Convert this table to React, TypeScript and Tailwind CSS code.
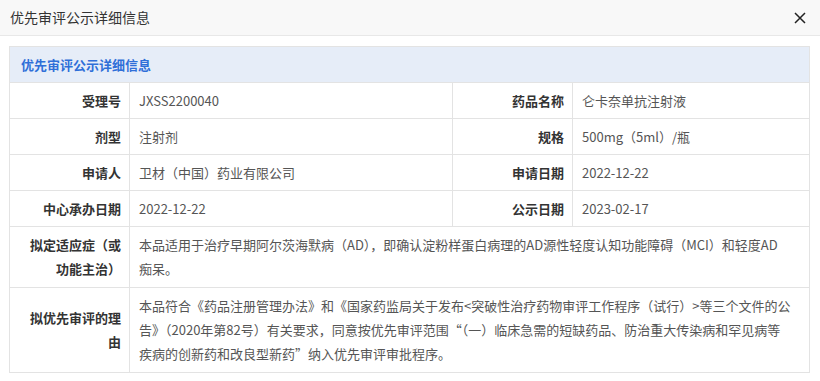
import React from 'react';

interface Pair {
  label: string;
  value: string;
}

interface WideRow {
  label: string;
  lines: string[];
}

const pairRows: [Pair, Pair][] = [
  [
    { label: '受理号', value: 'JXSS2200040' },
    { label: '药品名称', value: '仑卡奈单抗注射液' }
  ],
  [
    { label: '剂型', value: '注射剂' },
    { label: '规格', value: '500mg（5ml）/瓶' }
  ],
  [
    { label: '申请人', value: '卫材（中国）药业有限公司' },
    { label: '申请日期', value: '2022-12-22' }
  ],
  [
    { label: '中心承办日期', value: '2022-12-22' },
    { label: '公示日期', value: '2023-02-17' }
  ]
];

// line breaks kept as in the original page
const wideRows: WideRow[] = [
  {
    label: '拟定适应症（或功能主治）',
    lines: [
      '本品适用于治疗早期阿尔茨海默病（AD），即确认淀粉样蛋白病理的AD源性轻度认知功能障碍（MCI）和轻度AD',
      '痴呆。'
    ]
  },
  {
    label: '拟优先审评的理由',
    lines: [
      '本品符合《药品注册管理办法》和《国家药监局关于发布<突破性治疗药物审评工作程序（试行）>等三个文件的公',
      '告》（2020年第82号）有关要求，同意按优先审评范围“（一）临床急需的短缺药品、防治重大传染病和罕见病等',
      '疾病的创新药和改良型新药”纳入优先审评审批程序。'
    ]
  }
];

const labelCls =
  'border border-[#e3e3e3] pl-4 pr-2 text-right align-middle font-bold text-[#333] leading-6';
const valueCls =
  'border border-[#e3e3e3] pl-[9px] pr-2 text-left align-middle text-[#555] leading-6';

export default function App() {
  return (
    <div
      className="w-[820px] h-[381px] bg-white overflow-hidden"
      style={{ fontFamily: '"Noto Sans CJK SC", "Noto Sans", sans-serif' }}
    >
      {/* Dialog header */}
      <div className="h-[36px] bg-[#f8f8f8] border-b border-[#e8e8e8] flex items-center justify-between pl-[10px] pr-[14px]">
        <span className="text-[14px] text-[#333]">优先审评公示详细信息</span>
        <svg width="12" height="12" viewBox="0 0 12 12" className="text-[#222]">
          <path d="M1 1 L11 11 M11 1 L1 11" stroke="currentColor" strokeWidth="1.5" />
        </svg>
      </div>

      {/* Detail table */}
      <div className="pl-[9px] pt-[10px]">
        <table className="w-[800px] table-fixed border-collapse text-[13px]">
          <colgroup>
            <col className="w-[120px]" />
            <col className="w-[323px]" />
            <col className="w-[120px]" />
            <col className="w-[237px]" />
          </colgroup>
          <thead>
            <tr className="h-[36px]">
              <th
                colSpan={4}
                className="border border-[#e3e3e3] bg-[#e6edf8] pl-[11px] text-left font-bold text-[13px] text-[#2f6fd8]"
              >
                优先审评公示详细信息
              </th>
            </tr>
          </thead>
          <tbody>
            {pairRows.map((row, i) => (
              <tr key={i} className="h-[36px]">
                <td className={`${labelCls} py-[5px]`}>{row[0].label}</td>
                <td className={`${valueCls} py-[5px]`}>{row[0].value}</td>
                <td className={`${labelCls} py-[5px]`}>{row[1].label}</td>
                <td className={`${valueCls} py-[5px]`}>{row[1].value}</td>
              </tr>
            ))}
            {wideRows.map((row, i) => (
              <tr key={i}>
                <td className={`${labelCls} py-[6px]`}>{row.label}</td>
                <td colSpan={3} className={`${valueCls} py-[6px]`}>
                  {row.lines.map((line, j) => (
                    <div key={j} className="whitespace-nowrap">
                      {line}
                    </div>
                  ))}
                </td>
              </tr>
            ))}
          </tbody>
        </table>
      </div>
    </div>
  );
}
